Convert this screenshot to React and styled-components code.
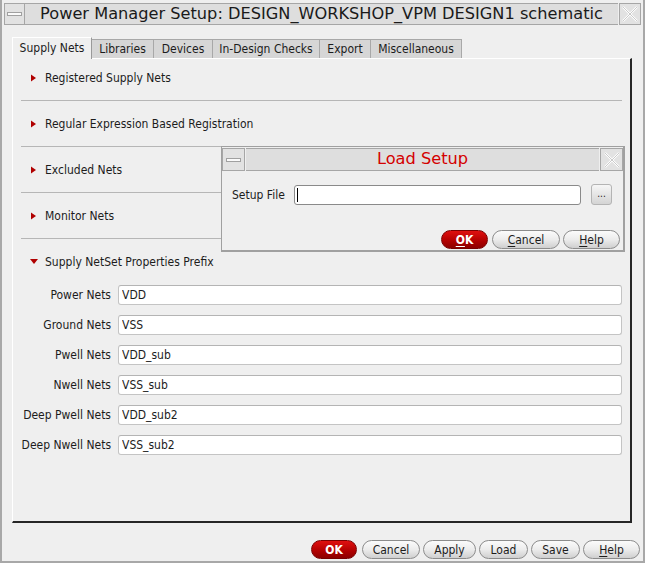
import React from 'react';
import styled, { createGlobalStyle, css } from 'styled-components';

const Global = createGlobalStyle`
  html, body { margin: 0; padding: 0; background: #efefef; }
  body {
    font-family: "DejaVu Sans Condensed", "DejaVu Sans", sans-serif;
    font-stretch: condensed;
    font-size: 12px;
    color: #1c1c1c;
  }
`;

const Window = styled.div`
  position: relative;
  width: 645px;
  height: 563px;
  box-sizing: border-box;
  border: 2px solid #a8a8a8;
  border-top: none;
  background: #efefef;
  display: flex;
  flex-direction: column;
`;

const TitleBar = styled.div`
  display: flex;
  height: 22px;
  margin-top: 3px;
  padding: 0 2px;
`;

const FrameBox = styled.div`
  box-sizing: border-box;
  width: ${(p) => p.$w}px;
  margin-left: ${(p) => p.$ml || 0}px;
  border: 1px solid #a6a6a6;
  background: #e2e2e2;
  display: flex;
  align-items: center;
  justify-content: center;
  flex-shrink: 0;
`;

const TitleText = styled.div`
  flex: 1;
  box-sizing: border-box;
  border: 1px solid #a6a6a6;
  border-left: none;
  border-right: none;
  background: #dedede;
  font-family: "DejaVu Sans", sans-serif;
  font-stretch: normal;
  font-size: ${(p) => p.$size || 16.2}px;
  line-height: 20px;
  text-align: center;
  color: ${(p) => p.$color || '#1a1a1a'};
  white-space: nowrap;
  overflow: hidden;
`;

const Dash = styled.div`
  width: 13px;
  height: 2px;
  border: 1px solid #a0a0a0;
  background: #fafafa;
`;

const CloseIcon = () => (
  <svg width="18" height="18" viewBox="0 0 18 18">
    <path d="M2 2 L16 16 M16 2 L2 16" stroke="#ffffff" strokeWidth="2.2" />
    <path d="M2 2 L16 16 M16 2 L2 16" stroke="#c4c4c4" strokeWidth="0.9" />
  </svg>
);

const TabBar = styled.div`
  display: flex;
  align-items: flex-end;
  margin-top: 12px;
  padding-left: 10px;
  height: 22px;
  position: relative;
  z-index: 2;
  margin-bottom: -1px;
`;

const Tab = styled.div`
  box-sizing: border-box;
  width: ${(p) => p.$w}px;
  display: flex;
  align-items: center;
  justify-content: center;
  white-space: nowrap;
  ${(p) =>
    p.$active
      ? css`
          height: 22px;
          background: #efefef;
          border-top: 1px solid #ffffff;
          border-left: 1px solid #ffffff;
          border-right: 1px solid #9a9a9a;
          padding-bottom: 1px;
        `
      : css`
          height: 19px;
          background: #d6d6d6;
          border-top: 1px solid #a8a8a8;
          border-right: 1px solid #a8a8a8;
          margin-bottom: 1px;
        `}
`;

const Panel = styled.div`
  box-sizing: border-box;
  margin: 0 11px 0 10px;
  height: 465px;
  border-top: 1px solid #ffffff;
  border-left: 1px solid #ffffff;
  border-right: 2px solid #262626;
  border-bottom: 2px solid #262626;
  display: flex;
  flex-direction: column;
`;

const Header = styled.div`
  display: flex;
  align-items: center;
  height: 22px;
  margin-top: ${(p) => (p.$first ? 8 : 12)}px;
  padding-left: 18px;
  gap: ${(p) => (p.$open ? 7 : 9)}px;
`;

const Separator = styled.div`
  height: 1px;
  background: #b6b6b6;
  margin: 11px 8px 0 8px;
`;

const Arrow = ({ open }) =>
  open ? (
    <svg width="8" height="6" viewBox="0 0 8 6" style={{ marginLeft: -1 }}>
      <polygon points="0,0 8,0 4,5" fill="#b00000" />
    </svg>
  ) : (
    <svg width="5" height="8" viewBox="0 0 5 8">
      <polygon points="0,0.5 5,4 0,7.5" fill="#b00000" />
    </svg>
  );

const Grid = styled.div`
  display: grid;
  grid-template-columns: 98px 1fr;
  column-gap: 7px;
  row-gap: 10px;
  margin: 12px 8px 0 0;
  align-items: center;
`;

const Label = styled.label`
  text-align: right;
  white-space: nowrap;
`;

const Field = styled.input`
  box-sizing: border-box;
  height: 20px;
  border: 1px solid #c4c4c4;
  border-top-color: #b4b4b4;
  border-radius: 3px;
  background: #ffffff;
  padding: 0 3px;
  font: inherit;
  font-stretch: condensed;
  color: #1c1c1c;
  outline: none;
  width: 100%;
`;

const Footer = styled.div`
  display: flex;
  justify-content: flex-end;
  gap: 3px;
  margin-top: 17px;
  padding-right: 3px;
`;

const Button = styled.div`
  box-sizing: border-box;
  width: ${(p) => p.$w}px;
  height: 19px;
  border-radius: 10px;
  display: flex;
  align-items: center;
  justify-content: center;
  white-space: nowrap;
  margin-right: ${(p) => p.$mr || 0}px;
  ${(p) =>
    p.$primary
      ? css`
          border: 1px solid #7a0000;
          background: linear-gradient(#e01010, #b00000 60%, #8c0000);
          color: #ffffff;
          font-weight: bold;
        `
      : css`
          border: 1px solid #8c8c8c;
          background: linear-gradient(#fbfbfb, #ececec 50%, #cfcfcf);
          color: #1c1c1c;
        `}
  u { text-decoration: underline; text-underline-offset: 2px; }
`;

const Dialog = styled.div`
  position: absolute;
  left: 219px;
  top: 146px;
  width: 404px;
  height: 106px;
  box-sizing: border-box;
  border: 1px solid #a0a0a0;
  border-bottom-width: 2px;
  border-right-width: 2px;
  background: #efefef;
  display: flex;
  flex-direction: column;
  z-index: 5;
`;

const DialogTitle = styled.div`
  display: flex;
  height: 23px;
  margin-top: 1px;
  gap: 1px;
`;

const DialogRow = styled.div`
  display: flex;
  align-items: center;
  margin-top: 13px;
  padding-left: 10px;
`;

const DialogLabel = styled.div`
  width: 62px;
  white-space: nowrap;
`;

const PathBox = styled.div`
  box-sizing: border-box;
  width: 287px;
  height: 20px;
  border: 1px solid #8a8a8a;
  border-radius: 3px;
  background: #ffffff;
  display: flex;
  align-items: center;
  padding-left: 2px;
`;

const Caret = styled.span`
  width: 1px;
  height: 14px;
  background: #000;
`;

const Dots = styled.div`
  box-sizing: border-box;
  width: 21px;
  height: 21px;
  margin-left: 10px;
  border: 1px solid #b4b4b4;
  border-radius: 3px;
  background: linear-gradient(#f6f6f6, #d4d4d4);
  display: flex;
  align-items: center;
  justify-content: center;
  font-size: 10px;
  padding-bottom: 2px;
`;

const DialogButtons = styled.div`
  display: flex;
  justify-content: flex-end;
  margin-top: auto;
  margin-bottom: 1px;
  padding-right: 3px;
  gap: 3px;
`;

const sections = [
  'Registered Supply Nets',
  'Regular Expression Based Registration',
  'Excluded Nets',
  'Monitor Nets',
];

const nets = [
  ['Power Nets', 'VDD'],
  ['Ground Nets', 'VSS'],
  ['Pwell Nets', 'VDD_sub'],
  ['Nwell Nets', 'VSS_sub'],
  ['Deep Pwell Nets', 'VDD_sub2'],
  ['Deep Nwell Nets', 'VSS_sub2'],
];

const tabs = [
  ['Supply Nets', 80],
  ['Libraries', 62],
  ['Devices', 59],
  ['In-Design Checks', 107],
  ['Export', 51],
  ['Miscellaneous', 91],
];

export default function App() {
  return (
    <>
      <Global />
      <Window>
        <TitleBar>
          <FrameBox $w={21}><Dash /></FrameBox>
          <TitleText>Power Manager Setup: DESIGN_WORKSHOP_VPM DESIGN1 schematic</TitleText>
          <FrameBox $w={22} $ml={1}><CloseIcon /></FrameBox>
        </TitleBar>

        <TabBar>
          {tabs.map(([t, w], i) => (
            <Tab key={t} $w={w} $active={i === 0}>{t}</Tab>
          ))}
        </TabBar>

        <Panel>
          {sections.map((s, i) => (
            <React.Fragment key={s}>
              <Header $first={i === 0}>
                <Arrow />
                <span>{s}</span>
              </Header>
              <Separator />
            </React.Fragment>
          ))}
          <Header $open>
            <Arrow open />
            <span>Supply NetSet Properties Prefix</span>
          </Header>
          <Grid>
            {nets.map(([l, v]) => (
              <React.Fragment key={l}>
                <Label>{l}</Label>
                <Field readOnly defaultValue={v} />
              </React.Fragment>
            ))}
          </Grid>
        </Panel>

        <Footer>
          <Button $primary $w={46} $mr={2}>OK</Button>
          <Button $w={58}>Cancel</Button>
          <Button $w={53}>Apply</Button>
          <Button $w={49}>Load</Button>
          <Button $w={49}>Save</Button>
          <Button $w={57}><span><u>H</u>elp</span></Button>
        </Footer>

        <Dialog>
          <DialogTitle>
            <FrameBox $w={23}><Dash /></FrameBox>
            <TitleText $color="#d40000">Load Setup</TitleText>
            <FrameBox $w={23}><CloseIcon /></FrameBox>
          </DialogTitle>
          <DialogRow>
            <DialogLabel>Setup File</DialogLabel>
            <PathBox><Caret /></PathBox>
            <Dots>...</Dots>
          </DialogRow>
          <DialogButtons>
            <Button $primary $w={47} $mr={1}><span><u>O</u>K</span></Button>
            <Button $w={68}><span><u>C</u>ancel</span></Button>
            <Button $w={57}><span><u>H</u>elp</span></Button>
          </DialogButtons>
        </Dialog>
      </Window>
    </>
  );
}
